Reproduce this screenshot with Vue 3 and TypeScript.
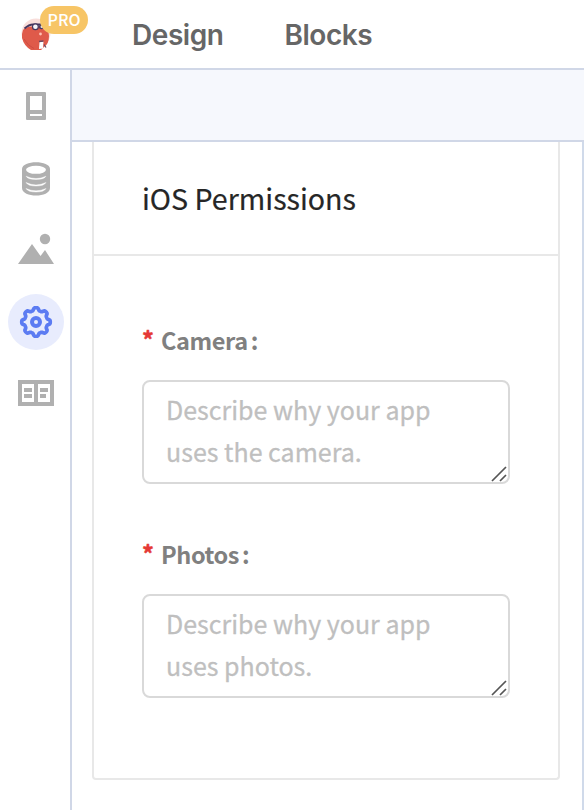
<script setup lang="ts">
interface PermissionField {
  id: string
  label: string
  placeholder: string
}

const tabs: string[] = ['Design', 'Blocks']

const fields: PermissionField[] = [
  { id: 'camera', label: 'Camera', placeholder: 'Describe why your app\nuses the camera.' },
  { id: 'photos', label: 'Photos', placeholder: 'Describe why your app\nuses photos.' },
]

// Eight-toothed gear outline around the centre of a 36x36 box.
function gearOutline(): string {
  const points: string[] = []
  for (let i = 0; i < 160; i++) {
    const angle = (i / 160) * Math.PI * 2
    const radius = 12.9 + 1.4 * Math.tanh(2 * Math.cos(angle * 8))
    points.push(`${(18 + radius * Math.cos(angle)).toFixed(2)} ${(18 + radius * Math.sin(angle)).toFixed(2)}`)
  }
  return `M${points.join('L')}Z`
}

const gearPath = gearOutline()
</script>

<template>
  <div class="app">
    <header class="topbar">
      <div class="brand">
        <svg class="logo" width="30" height="32" viewBox="0 0 30 32">
          <circle cx="15" cy="15" r="14.5" fill="#f8dedb" />
          <path d="M2 12 Q4 9 10 8.500 L23 9 Q28 12 28 18 Q28 26 23 29 L20 32 L10 32 Q3 28 1 20 Q0.500 16 2 12Z" fill="#df5a4a" />
          <path d="M3 21 Q7 28 13 30.500" fill="none" stroke="#cf4c42" stroke-width="1" />
          <path d="M3.500 10.500 Q8 6.500 12 6.500 L24 6.500" fill="none" stroke="#45375f" stroke-width="1.800" />
          <circle cx="14.400" cy="8.700" r="3.500" fill="#45375f" />
          <circle cx="20.500" cy="8.700" r="2.500" fill="#45375f" />
          <circle cx="14.400" cy="8.700" r="2.300" fill="#f4f6fb" />
          <circle cx="20.800" cy="8.700" r="1.300" fill="#dfe4ef" />
          <circle cx="19.500" cy="16" r="1.400" fill="#ffc1b4" />
          <path d="M18.500 24 L22.500 23.500 L22 30.500 L18 31Z" fill="#fff" />
          <path d="M18 23.500 L22.500 23 M23 26.500 L25 29.500" stroke="#6b4a63" stroke-width="1.300" />
        </svg>
        <span class="badge">PRO</span>
      </div>
      <nav class="tabs">
        <a v-for="tab in tabs" :key="tab" class="tab">{{ tab }}</a>
      </nav>
    </header>

    <div class="body">
      <aside class="sidebar">
        <div class="side-item">
          <svg width="36" height="36" viewBox="0 0 36 36">
            <path fill="#b0b0b0" fill-rule="evenodd" d="M9 4h18a1 1 0 0 1 1 1v26a1 1 0 0 1-1 1H9a1 1 0 0 1-1-1V5a1 1 0 0 1 1-1ZM12 8v14h12V8ZM12 26v2h12v-2Z" />
          </svg>
        </div>
        <div class="side-item">
          <svg width="36" height="36" viewBox="0 0 36 36">
            <path d="M4 9v19c0 10 28 10 28 0V9c0-9-28-9-28 0Z" fill="#b0b0b0" />
            <ellipse cx="18" cy="9.800" rx="10" ry="4" fill="#fff" />
            <path d="M8 16.200Q18 21 28 16.200Q26 19.500 18 19.500T8 16.200ZM8 22.500Q18 27.300 28 22.500Q26 26 18 26T8 22.500ZM8 28.500Q18 33.200 28 28.500Q26 32 18 32T8 28.500Z" fill="#fff" stroke="#fff" stroke-width=".4" />
          </svg>
        </div>
        <div class="side-item">
          <svg width="36" height="36" viewBox="0 0 36 36">
            <path d="M0 32L14 12L22.500 24L27 18L36 32Z" fill="#b0b0b0" />
            <circle cx="27" cy="7" r="5.200" fill="#b0b0b0" />
          </svg>
        </div>
        <div class="side-item active">
          <svg width="36" height="36" viewBox="0 0 36 36">
            <path :d="gearPath" fill="none" stroke="#5c7cf2" stroke-width="3.700" stroke-linejoin="round" />
            <circle cx="18" cy="18" r="4" fill="none" stroke="#5c7cf2" stroke-width="4" />
          </svg>
        </div>
        <div class="side-item">
          <svg width="36" height="36" viewBox="0 0 36 36">
            <path fill="#b0b0b0" fill-rule="evenodd" d="M0 4h36v26H0ZM4 8v18h12V8ZM20 8v18h12V8Z" />
            <path d="M6 12h8v4H6ZM6 18h8v4H6ZM22 12h8v4h-8ZM22 18h6v4h-6Z" fill="#b0b0b0" />
          </svg>
        </div>
      </aside>

      <main class="content">
        <div class="toolbar"></div>
        <div class="workspace">
          <section class="card">
            <h2 class="card-title"><span>iOS Permissions</span></h2>
            <div class="card-body">
              <div v-for="field in fields" :key="field.id" class="field">
                <label class="label" :for="field.id">
                  <span class="required">*</span>
                  <span class="label-text">{{ field.label }}</span>
                  <span class="colon">:</span>
                </label>
                <div class="input-wrap">
                  <textarea :id="field.id" class="input" :placeholder="field.placeholder"></textarea>
                  <svg class="grip" width="16" height="16" viewBox="0 0 16 16">
                    <path d="M1 15L15 1M9 15L15 9" stroke="#555" stroke-width="1.700" fill="none" />
                  </svg>
                </div>
              </div>
            </div>
          </section>
        </div>
      </main>
    </div>
  </div>
</template>

<style>
body {
  margin: 0;
  overflow: hidden;
}
</style>

<style scoped>
.app,
.app * {
  box-sizing: border-box;
}
.app {
  display: flex;
  flex-direction: column;
  width: 584px;
  height: 810px;
  overflow: hidden;
  background: #fff;
  font-family: 'Noto Sans CJK SC', 'Noto Sans', sans-serif;
}
.topbar {
  flex: none;
  display: flex;
  height: 70px;
  border-bottom: 2px solid #d0d7e7;
}
.brand {
  position: relative;
  width: 132px;
  padding: 18px 0 0 21px;
}
.logo {
  display: block;
}
.badge {
  position: absolute;
  left: 40px;
  top: 6px;
  width: 48px;
  height: 28px;
  border-radius: 14px;
  background: #f7c566;
  color: #fff;
  font-size: 16px;
  font-weight: 500;
  line-height: 27px;
  text-align: center;
}
.tabs {
  display: flex;
  gap: 61px;
}
.tab {
  font-family: Inter, sans-serif;
  font-size: 28px;
  font-weight: 600;
  line-height: 70px;
  height: 68px;
  color: #666;
  letter-spacing: -0.45px;
}
.body {
  flex: 1;
  display: flex;
  min-height: 0;
}
.sidebar {
  flex: none;
  display: flex;
  flex-direction: column;
  align-items: center;
  gap: 16px;
  width: 72px;
  padding-top: 8px;
  border-right: 2px solid #d0d7e7;
}
.side-item {
  display: flex;
  align-items: center;
  justify-content: center;
  width: 56px;
  height: 56px;
  margin-left: 2px;
  border-radius: 50%;
}
.side-item.active {
  background: #e8ecfd;
}
.content {
  flex: 1;
  display: flex;
  flex-direction: column;
  min-width: 0;
}
.toolbar {
  flex: none;
  height: 72px;
  background: #f6f8fd;
  border-bottom: 2px solid #d0d7e7;
}
.workspace {
  flex: 1;
  padding-left: 20px;
  border-right: 2px solid #d0daea;
}
.card {
  width: 468px;
  height: 638px;
  border: 2px solid #e8e8e8;
  border-top: 0;
  border-radius: 0 0 4px 4px;
}
.card-title {
  height: 114px;
  margin: 0;
  padding-left: 48px;
  border-bottom: 2px solid #e8e8e8;
  font-size: 28.6px;
  font-weight: 400;
  line-height: 111px;
  color: #262626;
  -webkit-text-stroke: 0.2px #262626;
}
.card-body {
  display: flex;
  flex-direction: column;
  gap: 50px;
  padding: 64px 48px 0;
}
.field {
  display: flex;
  flex-direction: column;
  height: 164px;
}
.label {
  display: flex;
  align-items: center;
  height: 60px;
  padding-bottom: 20px;
  font-size: 23.5px;
  font-weight: 700;
  line-height: 40px;
  letter-spacing: -0.4px;
  color: #808080;
}
.required {
  width: 19px;
  padding-bottom: 2px;
  color: #e53935;
  -webkit-text-stroke: 0.5px #e53935;
}
.colon {
  margin-left: 3px;
}
.input-wrap {
  position: relative;
  height: 104px;
}
.input {
  display: block;
  width: 368px;
  height: 104px;
  margin: 0;
  padding: 6px 22px;
  border: 2px solid #d9d9d9;
  border-radius: 8px;
  outline: none;
  resize: none;
  overflow: hidden;
  background: #fff;
  font-family: inherit;
  font-size: 25px;
  line-height: 42px;
}
.input::placeholder {
  color: #bfbfbf;
  opacity: 1;
  -webkit-text-stroke: 0.3px #bfbfbf;
}
.grip {
  position: absolute;
  right: 3px;
  bottom: 2px;
}
</style>
